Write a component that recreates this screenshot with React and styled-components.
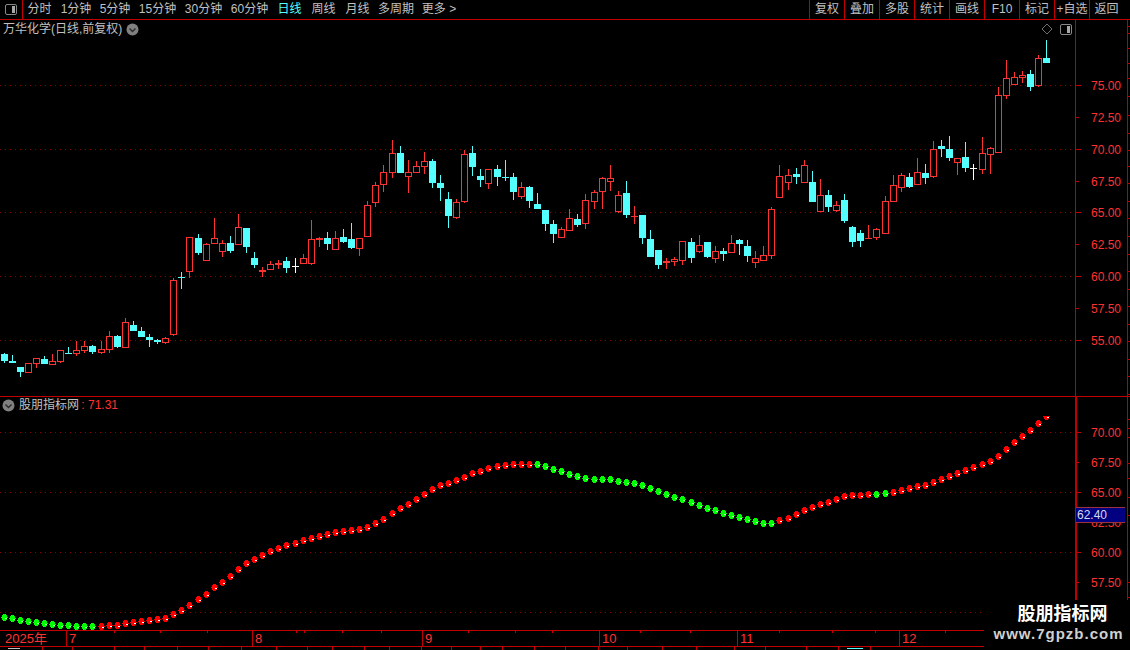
import React from "react";
import styled, { createGlobalStyle } from "styled-components";

const RED_LINE = "#c00000";
const UP = "#ff3232";
const DOWN = "#54ffff";
const TEXT = "#c0c0c0";
const FONT = `"Liberation Sans", "Noto Sans CJK SC", sans-serif`;

// [kind, bodyTop, bodyBottom, high, low], read off the chart in pixels
const candles = [
  ["c", 354, 361, 353, 363], ["c", 361, 363, 355, 363], ["c", 367, 372, 367, 377], ["r", 363, 373, 363, 373],
  ["r", 358, 364, 358, 368], ["c", 359, 364, 356, 364], ["r", 361, 365, 354, 365], ["r", 350, 362, 350, 363],
  ["c", 353, 354, 347, 354], ["r", 350, 354, 341, 356], ["r", 346, 351, 341, 353], ["c", 346, 352, 345, 354],
  ["r", 349, 353, 341, 354], ["r", 336, 350, 331, 353], ["c", 336, 347, 335, 348], ["r", 322, 348, 318, 348],
  ["c", 325, 331, 321, 331], ["c", 331, 337, 327, 337], ["c", 337, 340, 334, 347], ["c", 340, 342, 339, 344],
  ["r", 338, 343, 337, 344], ["r", 280, 335, 278, 336], ["c", 277, 278, 272, 289], ["r", 237, 272, 237, 278],
  ["c", 238, 253, 234, 255], ["r", 244, 261, 243, 261], ["r", 238, 244, 218, 244], ["r", 243, 252, 240, 257],
  ["c", 243, 251, 236, 253], ["r", 227, 245, 214, 245], ["c", 228, 247, 228, 253], ["c", 258, 265, 252, 268],
  ["r", 270, 272, 267, 277], ["r", 264, 270, 261, 270], ["r", 263, 265, 260, 269], ["c", 261, 268, 257, 273],
  ["w", 266, 267, 258, 273], ["r", 258, 264, 254, 264], ["r", 239, 264, 220, 265], ["r", 238, 240, 237, 247],
  ["c", 238, 244, 232, 250], ["r", 238, 250, 231, 250], ["c", 237, 242, 229, 243], ["c", 239, 248, 223, 249],
  ["r", 238, 249, 238, 256], ["r", 205, 237, 201, 237], ["r", 185, 203, 182, 207], ["r", 172, 185, 165, 192],
  ["r", 153, 173, 140, 178], ["c", 153, 173, 146, 173], ["r", 172, 177, 160, 193], ["r", 166, 173, 161, 173],
  ["r", 161, 167, 152, 174], ["c", 161, 183, 159, 188], ["c", 183, 188, 175, 201], ["c", 199, 216, 192, 228],
  ["r", 202, 218, 199, 219], ["r", 154, 202, 150, 203], ["c", 153, 167, 146, 176], ["c", 176, 180, 169, 187],
  ["r", 169, 184, 169, 189], ["c", 169, 177, 165, 186], ["c", 177, 178, 160, 181], ["c", 177, 192, 173, 200],
  ["r", 187, 197, 182, 199], ["c", 187, 201, 186, 208], ["c", 204, 209, 193, 209], ["c", 210, 224, 210, 231],
  ["c", 224, 234, 220, 243], ["r", 229, 238, 227, 238], ["r", 218, 231, 209, 231], ["c", 219, 225, 214, 227],
  ["r", 200, 224, 194, 229], ["r", 192, 202, 190, 209], ["r", 178, 192, 177, 209], ["r", 178, 182, 165, 191],
  ["r", 195, 212, 191, 213], ["c", 193, 215, 181, 218], ["r", 216, 217, 206, 224], ["c", 215, 238, 215, 244],
  ["c", 239, 257, 230, 257], ["c", 250, 265, 250, 269], ["r", 261, 263, 258, 269], ["r", 259, 262, 257, 266],
  ["r", 241, 261, 241, 265], ["c", 242, 258, 238, 263], ["r", 245, 252, 235, 253], ["c", 242, 257, 242, 258],
  ["r", 251, 259, 246, 263], ["c", 251, 254, 248, 261], ["r", 243, 253, 235, 253], ["c", 240, 244, 239, 255],
  ["c", 246, 256, 240, 262], ["r", 258, 263, 251, 268], ["r", 255, 261, 246, 261], ["r", 209, 256, 207, 259],
  ["r", 176, 198, 165, 198], ["r", 175, 183, 169, 190], ["c", 174, 177, 168, 184], ["r", 165, 183, 160, 183],
  ["c", 182, 202, 171, 202], ["r", 195, 212, 179, 212], ["c", 195, 207, 190, 212], ["r", 205, 211, 201, 212],
  ["c", 200, 221, 194, 223], ["c", 227, 242, 226, 247], ["c", 233, 241, 230, 247], ["r", 238, 239, 225, 239],
  ["r", 229, 238, 228, 240], ["r", 201, 234, 196, 234], ["r", 185, 202, 175, 202], ["r", 175, 188, 173, 192],
  ["c", 177, 187, 173, 188], ["r", 172, 185, 158, 185], ["c", 173, 178, 164, 184], ["r", 149, 177, 141, 178],
  ["c", 146, 149, 140, 157], ["c", 149, 158, 136, 161], ["r", 158, 163, 158, 175], ["c", 157, 168, 142, 172],
  ["w", 168, 169, 164, 180], ["r", 153, 170, 137, 174], ["r", 148, 155, 147, 174], ["r", 95, 153, 87, 153],
  ["r", 78, 96, 60, 99], ["r", 77, 85, 72, 85], ["r", 75, 78, 71, 83], ["c", 74, 87, 70, 91],
  ["r", 58, 86, 55, 87], ["c", 58, 63, 40, 63],
];

// lower pane curve, one value per candle
const curve = [
  617, 618, 620, 621, 622, 623, 624, 625, 625, 626, 626, 626,
  626, 625, 625, 623, 622, 621, 620, 619, 618, 614, 610, 605,
  599, 594, 587, 582, 576, 569, 563, 559, 555, 551, 548, 545, 543,
  540, 538, 536, 534, 532, 531, 530, 529, 527, 523, 519, 513,
  508, 504, 499, 494, 489, 485, 483, 480, 477, 473, 471, 468, 466,
  465, 464, 464, 464, 464, 466, 469, 471, 474, 476, 478, 479,
  479, 479, 481, 482, 483, 485, 488, 491, 494, 497, 499, 502,
  505, 508, 510, 513, 515, 517, 519, 521, 523, 523, 520, 518,
  514, 510, 507, 504, 502, 499, 496, 495, 495, 494, 494, 493,
  492, 490, 488, 486, 485, 482, 479, 476, 473, 470, 467, 464,
  461, 456, 449, 442, 436, 430, 423, 416,
];

const isGreen = (i) => i < 12 || (i >= 66 && i <= 95) || i === 108 || i === 109;

// bars sit 8px apart with one wider gap about every 12 bars
const wideGaps = [12, 24, 36, 48, 61, 73, 85, 97, 109, 121];
const barX = (i) => 4 + i * 8 + wideGaps.filter((g) => i >= g).length;

const priceLabels = [
  [85, "75.00", true], [117, "72.50"], [149, "70.00", true], [181, "67.50"], [212, "65.00", true],
  [244, "62.50"], [276, "60.00", true], [308, "57.50"], [340, "55.00", true],
];
const indicatorLabels = [
  [432, "70.00", true], [462, "67.50"], [492, "65.00", true], [522, "62.50"], [552, "60.00", true], [582, "57.50"],
];
const rulerTicks = [26, 33, 48, 63, 78, 96, 115, 133, 150, 166, 183, 201, 218, 236, 254, 271, 289, 306, 324, 341, 359, 376, 394, 419, 428, 437, 463, 478, 497, 515, 582, 597];

const tabs = [
  ["分时", 33], ["1分钟", 40], ["5分钟", 38], ["15分钟", 47], ["30分钟", 45], ["60分钟", 47],
  ["日线", 33, true], ["周线", 35], ["月线", 33], ["多周期", 44], ["更多 >", 42],
];
const actions = ["复权", "叠加", "多股", "统计", "画线", "F10", "标记", "+自选", "返回"];
const months = [["2025年", 67], ["7", 186], ["8", 170], ["9", 177], ["10", 138], ["11", 162], ["12", 230]];
const dateTicks = [114, 160, 207, 296, 304, 342, 381, 468, 515, 552, 640, 690, 779, 832, 875, 945];
const statusCells = [43, 30, 42, 30, 33, 31, 33, 35, 31, 25, 32, 25, 32, 30, 29, 22, 32, 31, 33, 29, 35, 34, 38, 31, 41, 32, 32, 259];

const GlobalStyle = createGlobalStyle`
  html, body {
    margin: 0;
    padding: 0;
    background: #000;
  }
`;

const Page = styled.div`
  position: relative;
  width: 1130px;
  height: 650px;
  display: flex;
  flex-direction: column;
  overflow: hidden;
  background: #000;
  font-family: ${FONT};
  font-size: 12px;
  color: ${TEXT};
`;

const Toolbar = styled.div`
  height: 19px;
  flex: none;
  display: flex;
  border-bottom: 1px solid ${RED_LINE};
`;

const SideButton = styled.div`
  width: 23px;
  display: flex;
  align-items: center;
  justify-content: center;
  padding-right: 1px;
  box-sizing: border-box;
  border-right: 1px solid ${RED_LINE};
`;

const Tabs = styled.div`
  display: flex;
  flex: 1;
`;

const Tab = styled.div`
  width: ${(p) => p.$w}px;
  line-height: 19px;
  text-align: center;
  white-space: nowrap;
  color: ${(p) => (p.$active ? DOWN : TEXT)};
`;

const Actions = styled.div`
  display: flex;
`;

const Action = styled.div`
  width: 35px;
  line-height: 19px;
  box-sizing: border-box;
  text-align: center;
  white-space: nowrap;
  border-left: 1px solid ${RED_LINE};
  &:last-child {
    width: 41px;
    padding-right: 7px;
  }
`;

const Pane = styled.div`
  position: relative;
  display: flex;
  flex: none;
  height: ${(p) => p.$h}px;
  border-bottom: ${(p) => (p.$ruled ? `1px solid ${RED_LINE}` : "none")};
`;

const ChartSvg = styled.svg`
  display: block;
  flex: none;
`;

const AxisColumn = styled.div`
  position: relative;
  width: 55px;
  flex: none;
`;

const AxisLabel = styled.div`
  position: absolute;
  left: 16px;
  top: ${(p) => p.$top}px;
  line-height: 14px;
  color: ${UP};
`;

const Legend = styled.div`
  position: absolute;
  left: ${(p) => p.$left}px;
  top: ${(p) => p.$top}px;
  display: flex;
  align-items: center;
  gap: 4px;
  line-height: 16px;
  white-space: nowrap;
`;

const LegendValue = styled.span`
  color: ${UP};
  margin-left: -1px;
`;

const CornerTools = styled.div`
  position: absolute;
  left: 1041px;
  top: 3px;
  display: flex;
  align-items: center;
  gap: 7px;
`;

const PriceTag = styled.div`
  position: absolute;
  left: 1076px;
  top: 110px;
  width: 49px;
  height: 16px;
  line-height: 15px;
  padding-left: 1px;
  box-sizing: border-box;
  background: #000080;
  border-top: 1px solid #a03040;
  border-bottom: 1px solid #a03040;
  color: #d8d8f0;
`;

const DateRow = styled.div`
  height: 15px;
  flex: none;
  position: relative;
  display: flex;
  border-top: 1px solid ${RED_LINE};
  border-bottom: 1px solid ${RED_LINE};
  color: ${UP};
`;

const DateCell = styled.div`
  width: ${(p) => p.$w}px;
  box-sizing: border-box;
  padding-left: ${(p) => (p.$first ? 5 : 2)}px;
  border-right: 1px solid ${RED_LINE};
  font-size: 13px;
  line-height: 16px;
  white-space: nowrap;
  &:last-child {
    border-right: none;
  }
`;

const DateTick = styled.div`
  position: absolute;
  top: 0;
  left: ${(p) => p.$x}px;
  width: 1px;
  height: 2px;
  background: ${RED_LINE};
`;

const StatusRow = styled.div`
  height: 3px;
  flex: none;
  display: flex;
  overflow: hidden;
`;

const StatusCell = styled.div`
  width: ${(p) => p.$w}px;
  box-sizing: border-box;
  border-right: 1px solid ${RED_LINE};
  display: flex;
  padding: 1px 0 0 8px;
`;

const Sliver = styled.div`
  width: ${(p) => p.$w}px;
  height: 1px;
  background: ${(p) => p.$color};
`;

const Watermark = styled.div`
  position: absolute;
  right: 0;
  bottom: 0;
  width: 146px;
  height: 50px;
  background: #000;
  display: flex;
  flex-direction: column;
  align-items: center;
  font-weight: bold;
`;

const WatermarkTitle = styled.div`
  margin: 3px 0 0 11px;
  color: #fff;
  font-size: 18px;
  line-height: 22px;
`;

const WatermarkUrl = styled.div`
  margin: 0 0 0 3px;
  color: #d0d0d0;
  font-size: 15px;
  line-height: 18px;
  letter-spacing: 1px;
`;

const DropIcon = () => (
  <svg width="13" height="13" viewBox="0 0 13 13">
    <circle cx="6.5" cy="6.5" r="6" fill="#808080" />
    <path d="M3.5 5.5 L6.5 8.5 L9.5 5.5" fill="none" stroke="#2a2a2a" strokeWidth="1.4" />
  </svg>
);

const PanelIcon = () => (
  <svg width="12" height="11" viewBox="0 0 12 11">
    <rect x="0.5" y="0.5" width="11" height="10" rx="1.5" fill="#000" stroke="#888" />
    <rect x="7" y="2" width="3" height="7" fill="#a8a8a8" />
  </svg>
);

const DiamondIcon = () => (
  <svg width="12" height="12" viewBox="0 0 12 12">
    <path d="M6 1 L11 6 L6 11 L1 6 Z" fill="none" stroke="#707070" />
  </svg>
);

const Candle = ({ data, x }) => {
  const [kind, top, bottom, high, low] = data;
  const color = kind === "r" ? UP : kind === "c" ? DOWN : "#fff";
  const h = bottom - top;
  return (
    <g>
      <rect x={x} y={high} width="1" height={low - high} fill={color} />
      <rect x={x - 3} y={top} width="7" height={h} fill={color} />
      {kind === "r" && h > 2 && <rect x={x - 2} y={top + 1} width="5" height={h - 2} fill="#000" />}
    </g>
  );
};

const Dot = ({ x, y, green }) => {
  const fill = green ? "#00ff00" : "#ff0000";
  return (
    <g fill={fill}>
      <rect x={x - 3} y={y} width="7" height="1" />
      <rect x={x - 2} y={y - 2} width="5" height="5" />
      <rect x={x - 1} y={y - 3} width="3" height="7" />
      <rect x={x + 1} y={y + 1} width="2" height="1" fill={green ? "#a0ffa0" : "#fff"} />
    </g>
  );
};

const GridLine = ({ y }) => (
  <line x1="0" x2="1075" y1={y + 0.5} y2={y + 0.5} stroke="#8c0000" strokeDasharray="1 4" />
);

const PriceAxis = ({ viewTop, height, labels, ticks, thick }) => (
  <AxisColumn>
    <ChartSvg width="55" height={height} viewBox={`1075 ${viewTop} 55 ${height}`} shapeRendering="crispEdges">
      <rect x="1075" y={viewTop} width={thick ? 2 : 1} height={height} fill={RED_LINE} />
      <rect x="1127" y={viewTop} width="1" height={height} fill={RED_LINE} />
      {ticks.filter((t) => t >= viewTop && t < viewTop + height).map((t) => (
        <rect key={t} x="1127" y={t} width="3" height="1" fill={RED_LINE} />
      ))}
      {labels.map(([y, text, major]) => (
        <rect key={text} x="1076" y={y} width={major ? 5 : 3} height="1" fill={RED_LINE} />
      ))}
    </ChartSvg>
    {labels.map(([y, text]) => (
      <AxisLabel key={text} $top={y - viewTop - 6}>{text}</AxisLabel>
    ))}
  </AxisColumn>
);

export default function App() {
  return (
    <Page>
      <GlobalStyle />
      <Toolbar>
        <SideButton>
          <PanelIcon />
        </SideButton>
        <Tabs>
          {tabs.map(([label, w, active]) => (
            <Tab key={label} $w={w} $active={active}>{label}</Tab>
          ))}
        </Tabs>
        <Actions>
          {actions.map((a) => (
            <Action key={a}>{a}</Action>
          ))}
        </Actions>
      </Toolbar>

      <Pane $h={376} $ruled>
        <ChartSvg width="1075" height="376" viewBox="0 20 1075 376" shapeRendering="crispEdges">
          {[85, 149, 212, 276, 340].map((y) => (
            <GridLine key={y} y={y} />
          ))}
          {candles.map((c, i) => (
            <Candle key={i} data={c} x={barX(i)} />
          ))}
        </ChartSvg>
        <PriceAxis viewTop={20} height={376} labels={priceLabels} ticks={rulerTicks} />
        <Legend $left={3} $top={1}>
          <span>万华化学(日线,前复权)</span>
          <DropIcon />
        </Legend>
        <CornerTools>
          <DiamondIcon />
          <PanelIcon />
        </CornerTools>
      </Pane>

      <Pane $h={233}>
        <ChartSvg width="1075" height="233" viewBox="0 397 1075 233" shapeRendering="crispEdges">
          <defs>
            <clipPath id="plot">
              <rect x="0" y="416" width="1075" height="214" />
            </clipPath>
          </defs>
          {[432, 492, 552, 612].map((y) => (
            <GridLine key={y} y={y} />
          ))}
          <g clipPath="url(#plot)">
            {curve.map((y, i) => (
              <Dot key={i} x={barX(i)} y={y} green={isGreen(i)} />
            ))}
          </g>
        </ChartSvg>
        <PriceAxis viewTop={397} height={233} labels={indicatorLabels} ticks={rulerTicks} thick />
        <PriceTag>62.40</PriceTag>
        <Legend $left={2} $top={0}>
          <DropIcon />
          <span>
            股朋指标网 <LegendValue>: 71.31</LegendValue>
          </span>
        </Legend>
      </Pane>

      <DateRow>
        {months.map(([label, w], i) => (
          <DateCell key={label} $w={w} $first={i === 0}>{label}</DateCell>
        ))}
        {dateTicks.map((x) => (
          <DateTick key={x} $x={x} />
        ))}
      </DateRow>

      <StatusRow>
        {statusCells.map((w, i) => (
          <StatusCell key={i} $w={w}>
            {i === 0 && <Sliver $w={12} $color={TEXT} />}
            {i === 26 && <Sliver $w={16} $color={DOWN} />}
          </StatusCell>
        ))}
      </StatusRow>

      <Watermark>
        <WatermarkTitle>股朋指标网</WatermarkTitle>
        <WatermarkUrl>www.7gpzb.com</WatermarkUrl>
      </Watermark>
    </Page>
  );
}
